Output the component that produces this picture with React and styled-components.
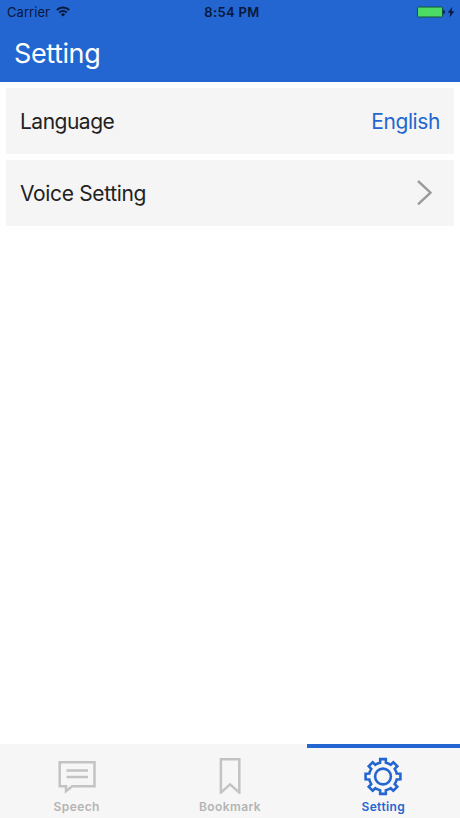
import React from "react";
import styled, { createGlobalStyle } from "styled-components";

const BLUE = "#2466d1";
const GREY = "#c3c3c3";

const GlobalStyle = createGlobalStyle`
  * { box-sizing: border-box; }
  body { margin: 0; background: #fff; font-family: Inter, "Liberation Sans", sans-serif; }
`;

const Screen = styled.div`
  width: 460px;
  height: 818px;
  display: flex;
  flex-direction: column;
  background: #fff;
  overflow: hidden;
`;

const Header = styled.header`
  height: 82px;
  flex: none;
  background: ${BLUE};
`;

const StatusBar = styled.div`
  height: 24px;
  display: grid;
  grid-template-columns: 1fr auto 1fr;
  align-items: center;
  padding: 0 5px 0 7px;
  font-size: 13px;
  line-height: 24px;
  color: #07183a;
`;

const Carrier = styled.div`
  display: flex;
  align-items: center;
  gap: 6px;
  letter-spacing: 0.05px;
  svg { margin-top: -2px; }
`;

const Clock = styled.div`
  font-weight: 600;
  letter-spacing: 0.35px;
  padding-left: 2px;
`;

const Power = styled.div`
  display: flex;
  justify-content: flex-end;
`;

const Title = styled.h1`
  margin: 0;
  padding: 13px 14px 0;
  font-size: 27px;
  line-height: 34px;
  font-weight: 400;
  letter-spacing: -0.4px;
  color: #fff;
`;

const List = styled.main`
  flex: 1;
  display: flex;
  flex-direction: column;
  gap: 6px;
  padding: 6px;
`;

const Row = styled.div`
  height: 66px;
  display: flex;
  align-items: center;
  justify-content: space-between;
  padding: 0 14px;
  background: #f5f5f5;
  font-size: 21px;
  color: #222;
`;

const Label = styled.span`
  letter-spacing: ${(p) => (p.$loose ? "-0.34px" : "-0.5px")};
`;

const Value = styled.span`
  color: ${BLUE};
  letter-spacing: -0.4px;
`;

const Chevron = styled.svg`
  margin-right: 7px;
`;

const TabBar = styled.nav`
  height: 74px;
  flex: none;
  display: grid;
  grid-template-columns: repeat(3, 1fr);
  background: #f6f6f6;
`;

const Tab = styled.div`
  display: flex;
  flex-direction: column;
  align-items: center;
  border-top: 4px solid ${(p) => (p.$active ? BLUE : "transparent")};
  padding-top: 8px;
  color: ${(p) => (p.$active ? BLUE : GREY)};
`;

const TabLabel = styled.span`
  margin-top: 5px;
  font-size: 12px;
  line-height: 16px;
  font-weight: 600;
  letter-spacing: 0.4px;
  color: ${(p) => (p.$active ? BLUE : "#b4b4b4")};
`;

const WifiIcon = () => (
  <svg width="14" height="11" viewBox="0 0 14 11" fill="none" stroke="#07183a" strokeWidth="1.9">
    <path d="M.8 4A8.8 8.8 0 0 1 13.2 4" />
    <path d="M3.2 6.6A5.4 5.4 0 0 1 10.8 6.6" />
    <path d="M7 10.6 4.9 8.4A3 3 0 0 1 9.1 8.4Z" fill="#07183a" stroke="none" />
  </svg>
);

const BatteryIcon = () => (
  <svg width="38" height="12" viewBox="0 0 38 12">
    <rect x=".5" y="1" width="25" height="10" rx="1" fill="#4cdb64" stroke="#14503f" />
    <path d="M26.3 3.5Q29.6 6 26.3 8.5Z" fill="#07183a" />
    <path d="M35.4 .8 30.8 6.8h2.7L32.4 11.4 37.4 5.2h-3Z" fill="#07183a" />
  </svg>
);

const SpeechIcon = () => (
  <svg width="40" height="38" viewBox="0 0 40 38" fill="none" stroke="currentColor" strokeWidth="2.5">
    <path d="M2.7 6.2H37.5V30.2H15.2L9 35.2V30.2H2.7Z" />
    <path d="M9.5 14.6H31M9.5 21H31" />
  </svg>
);

const BookmarkIcon = () => (
  <svg width="40" height="38" viewBox="0 0 40 38" fill="none" stroke="currentColor" strokeWidth="2.5">
    <path d="M10.9 3.2H29.3V36.6L20.1 28.4 10.9 36.6Z" />
  </svg>
);

// Outline of an eight-toothed wheel centred on the origin.
const gearPath = () => {
  const out = [];
  for (let i = 0; i < 8; i++) {
    const a = (i * Math.PI) / 4;
    const at = (x, y) =>
      `${(x * Math.cos(a) - y * Math.sin(a)).toFixed(2)} ${(x * Math.sin(a) + y * Math.cos(a)).toFixed(2)}`;
    out.push(
      `${i ? "A14 14 0 0 1" : "M"}${at(-2.9, -13.7)}L${at(-2.8, -17.4)}L${at(2.8, -17.4)}L${at(2.9, -13.7)}`
    );
  }
  return `${out.join("")}A14 14 0 0 1 -2.9 -13.7Z`;
};

const GearIcon = () => (
  <svg width="40" height="38" viewBox="-20 -20.5 40 38" overflow="visible" fill="none" stroke="currentColor" strokeWidth="2.6">
    <path d={gearPath()} />
    <circle r="7.9" />
  </svg>
);

export default function App() {
  return (
    <>
      <GlobalStyle />
      <Screen>
        <Header>
          <StatusBar>
            <Carrier>
              Carrier
              <WifiIcon />
            </Carrier>
            <Clock>8:54 PM</Clock>
            <Power>
              <BatteryIcon />
            </Power>
          </StatusBar>
          <Title>Setting</Title>
        </Header>
        <List>
          <Row>
            <Label>Language</Label>
            <Value>English</Value>
          </Row>
          <Row>
            <Label $loose>Voice Setting</Label>
            <Chevron width="17" height="28" viewBox="0 0 17 28" fill="none" stroke="#9b9b9b" strokeWidth="2.4">
              <path d="M2 2 14.5 13.7 2 25.4" />
            </Chevron>
          </Row>
        </List>
        <TabBar>
          <Tab>
            <SpeechIcon />
            <TabLabel>Speech</TabLabel>
          </Tab>
          <Tab>
            <BookmarkIcon />
            <TabLabel>Bookmark</TabLabel>
          </Tab>
          <Tab $active>
            <GearIcon />
            <TabLabel $active>Setting</TabLabel>
          </Tab>
        </TabBar>
      </Screen>
    </>
  );
}
